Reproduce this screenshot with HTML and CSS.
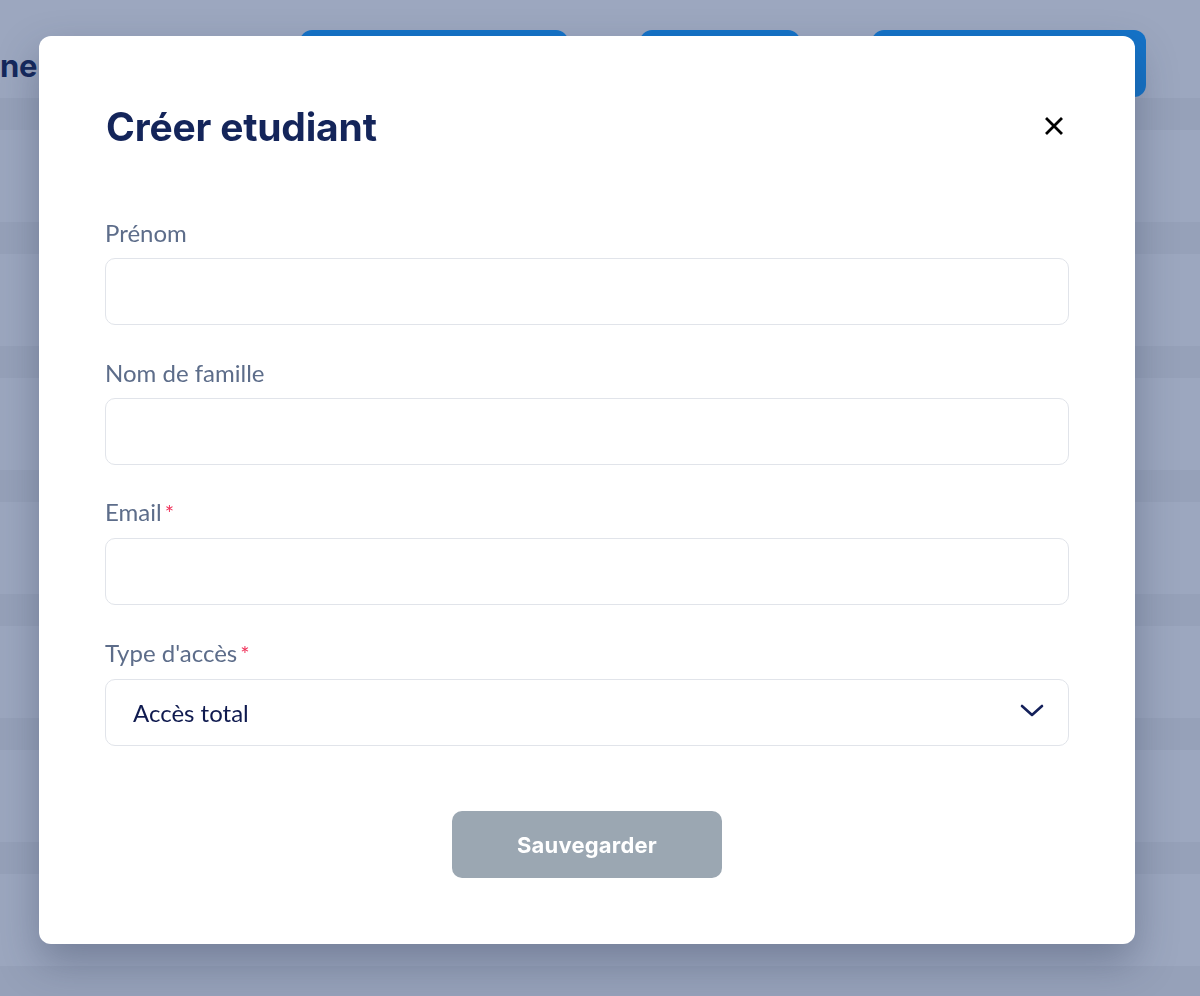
FILE: index.html
```html
<html>
<head>
<title>Créer etudiant</title>
<link rel="stylesheet" href="styles.css">
</head>
<body>

<div class="page">
  <div class="page-header">
    <div class="page-title">ne</div>
    <div class="header-actions">
      <button class="btn-blue wide"></button>
      <button class="btn-blue small"></button>
      <button class="btn-blue last"></button>
    </div>
  </div>
  <div class="rows">
    <div class="row dark"></div><div class="row"></div>
    <div class="row dark"></div><div class="row"></div>
    <div class="row dark"></div><div class="row"></div>
    <div class="row dark"></div><div class="row"></div>
    <div class="row dark"></div><div class="row"></div>
    <div class="row dark"></div><div class="row"></div>
    <div class="row dark"></div><div class="row"></div>
    <div class="row dark"></div>
  </div>
</div>

<div class="overlay">
  <div class="modal">
    <div class="modal-header">
      <h1>Créer etudiant</h1>
      <button class="close" aria-label="Fermer">
        <svg width="18" height="18" viewBox="0 0 18 18"><path d="M2 2L16 16M16 2L2 16" stroke="#000" stroke-width="2.8" stroke-linecap="square"/></svg>
      </button>
    </div>

    <form class="form" onsubmit="return false">
      <div class="field">
        <label for="prenom">Prénom</label>
        <input type="text" id="prenom">
      </div>
      <div class="field">
        <label for="nom">Nom de famille</label>
        <input type="text" id="nom">
      </div>
      <div class="field">
        <label for="email">Email<span class="req">*</span></label>
        <input type="email" id="email">
      </div>
      <div class="field">
        <label for="acces">Type d'accès<span class="req">*</span></label>
        <div class="select-wrap">
          <select id="acces">
            <option>Accès total</option>
            <option>Accès limité</option>
          </select>
          <svg class="chevron" width="24" height="14" viewBox="0 0 24 14"><path d="M2 2L12 11L22 2" fill="none" stroke="#14205a" stroke-width="2.6" stroke-linecap="round" stroke-linejoin="round"/></svg>
        </div>
      </div>

      <div class="footer">
        <button class="save" disabled>Sauvegarder</button>
      </div>
    </form>
  </div>
</div>

</body>
</html>
```

FILE: styles.css
```css
html, body {
  margin:0;
  height:100%;
}

body {
  font-family:Lato, "Open Sans", sans-serif;
  background:#9ca7bf;
  overflow:hidden;
}

/* page behind the modal */
.page {
  height:100%;
  overflow:hidden;
}

.page-header {
  height:98px;
  display:flex;
  align-items:flex-start;
}

.page-title {
  width:38px;
  padding-top:49px;
  line-height:34px;
  white-space:nowrap;
  font-family:Inter, sans-serif;
  font-weight:700;
  font-size:31px;
  letter-spacing:-0.3px;
  color:#14285c;
}

.header-actions {
  display:flex;
  padding-top:30px;
  margin-left:262px;
  gap:72px;
}

.btn-blue {
  height:67px;
  border:0;
  border-radius:12px;
  background:#1473c8;
}

.btn-blue.wide { width:268px; }
.btn-blue.small { width:160px; }
.btn-blue.last { width:274px; }

.row {
  height:92px;
}

.row.dark {
  height:32px;
  background:#96a1b9;
}

/* modal */
.overlay {
  position:fixed;
  top:0;
  left:0;
  right:0;
  bottom:0;
  padding:36px 65px 0 39px;
}

.modal {
  background:#fff;
  border-radius:12px;
  padding:66px;
  box-shadow:0 18px 40px rgba(40,52,80,0.35);
}

.modal-header {
  display:flex;
  justify-content:space-between;
  align-items:center;
  height:48px;
  margin-bottom:69px;
}

.modal-header h1 {
  margin:0;
  font-family:Inter, sans-serif;
  font-weight:700;
  font-size:39px;
  letter-spacing:-0.2px;
  color:#14255a;
  padding-left:1px;
}

.close {
  background:none;
  border:0;
  padding:0;
  margin-right:6px;
  display:flex;
}

.form {
  display:flex;
  flex-direction:column;
  gap:33.6px;
  margin:0;
}

.field {
  display:flex;
  flex-direction:column;
}

.field label {
  font-size:24px;
  line-height:28px;
  color:#5d6d8a;
  margin-bottom:11px;
}

.req {
  color:#f0325a;
  font-size:22px;
  margin-left:3px;
}

.field input, .field select {
  height:67px;
  border:1px solid #e1e4ea;
  border-radius:10px;
  font-family:Lato, sans-serif;
  font-size:24px;
  color:#0f1a4f;
  padding:0 27px;
  background:#fff;
  box-sizing:border-box;
  width:100%;
  outline:none;
}

.select-wrap {
  position:relative;
}

.field select {
  -webkit-appearance:none;
  appearance:none;
}

.chevron {
  position:absolute;
  right:25px;
  top:25px;
  pointer-events:none;
}

.footer {
  display:flex;
  justify-content:center;
  margin-top:32px;
}

.save {
  width:270px;
  height:67px;
  border:0;
  border-radius:10px;
  background:#9ba7b2;
  color:#fff;
  font-family:Inter, sans-serif;
  font-weight:700;
  font-size:22px;
  letter-spacing:0.2px;
}
```
